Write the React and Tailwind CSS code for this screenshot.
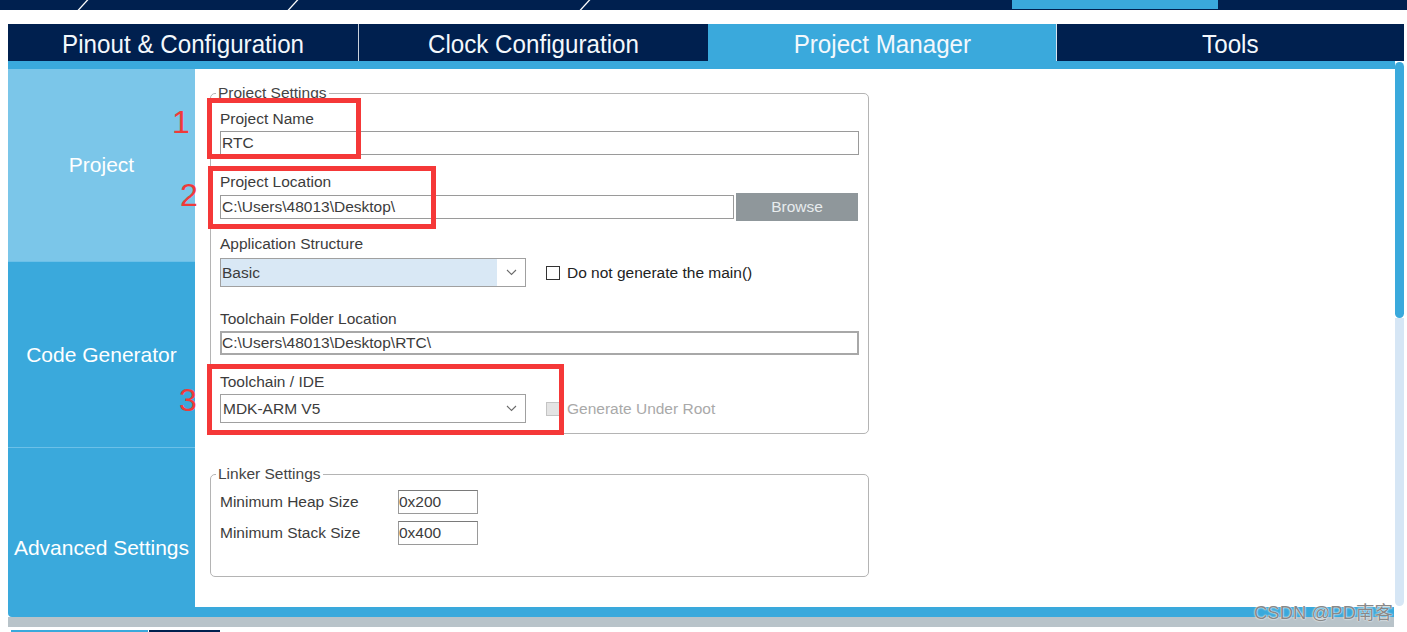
import React from "react";

const Chevron = () => (
    <svg width="11" height="7" viewBox="0 0 11 7" fill="none">
        <path d="M1 1 L5.5 5.5 L10 1" stroke="#6b6b6b" strokeWidth="1.1" />
    </svg>
);

const App = () => {
    return (
        <div className="relative h-[632px] w-[1407px] overflow-hidden bg-white font-['Liberation_Sans','Noto_Sans_CJK_SC',sans-serif]">
            {/* breadcrumb strip (cut off at the top) */}
            <div className="relative flex h-[10px] bg-[#00204f]">
                <div className="ml-[1012px] h-[9px] w-[206px] bg-[#3aa9dc]" />
                <svg className="absolute left-0 top-0" width="1407" height="10">
                    <line x1="78" y1="10.5" x2="88" y2="-0.5" stroke="#ffffff" strokeWidth="1.3" />
                    <line x1="288" y1="10.5" x2="298" y2="-0.5" stroke="#ffffff" strokeWidth="1.3" />
                    <line x1="580" y1="10.5" x2="590" y2="-0.5" stroke="#ffffff" strokeWidth="1.3" />
                </svg>
            </div>

            <div className="pl-[8px] pr-[3px] pt-[14px]">
                {/* Tabs */}
                <div className="flex h-[37px] text-[26px] text-[#f3f8fc]">
                    <div className="flex w-[350px] items-center justify-center bg-[#00204f] pt-[3px]">
                        <span className="inline-block scale-x-[0.93]">Pinout &amp; Configuration</span>
                    </div>
                    <div className="flex w-[349px] items-center justify-center border-l border-[#c9d1dc] bg-[#00204f] pt-[3px]">
                        <span className="inline-block scale-x-[0.93]">Clock Configuration</span>
                    </div>
                    <div className="flex w-[349px] items-center justify-center border-l border-[#00204f] bg-[#3aa9dc] pt-[3px]">
                        <span className="inline-block scale-x-[0.93]">Project Manager</span>
                    </div>
                    <div className="flex flex-1 items-center justify-center border-l border-[#d7e3ee] bg-[#00204f] pt-[3px]">
                        <span className="inline-block scale-x-[0.93]">Tools</span>
                    </div>
                </div>

                <div className="flex">
                    <div className="flex flex-1 flex-col">
                        <div className="h-[8px] bg-[#3aa9dc]" />
                        <div className="flex h-[538px]">
                            {/* Sidebar */}
                            <div className="flex w-[187px] flex-col text-[21px] text-white">
                                <div className="flex h-[192px] items-center justify-center bg-[#7bc6e9]">Project</div>
                                <div className="flex h-[186px] items-center justify-center border-t border-[#6cc0e8] bg-[#3aa9dc]">
                                    Code Generator
                                </div>
                                <div className="flex flex-1 items-start justify-center border-t border-[#6cc0e8] bg-[#3aa9dc] pt-[84px]">
                                    Advanced Settings
                                </div>
                            </div>

                            {/* Main content */}
                            <div className="flex-1 bg-white pl-[15px] pt-[15px] text-[15.5px] text-[#3c3c3c]">
                                <fieldset className="w-[659px] rounded-[5px] border border-[#b4b4b4] px-[5px] pb-[10px] pt-[8px]">
                                    <legend className="px-[2px] leading-[18px] text-[#444]">Project Settings</legend>
                                    <div className="ml-[4px]">
                                        <div className="leading-[18px]">Project Name</div>
                                        <div className="mt-[3px] flex h-[24px] w-[639px] items-center border border-[#9a9a9a] pl-[1px]">RTC</div>

                                        <div className="mt-[18px] leading-[18px]">Project Location</div>
                                        <div className="mt-[2px] flex h-[28px] items-center">
                                            <div className="flex h-[24px] w-[514px] items-center border border-[#9a9a9a] pl-[1px]">
                                                C:\Users\48013\Desktop\
                                            </div>
                                            <div className="ml-[2px] flex h-[28px] w-[122px] items-center justify-center bg-[#8f979b] text-[#e8ecee]">
                                                Browse
                                            </div>
                                        </div>

                                        <div className="mt-[14px] leading-[18px]">Application Structure</div>
                                        <div className="mt-[5px] flex items-center">
                                            <div className="flex h-[29px] w-[306px] border border-[#a0a0a0]">
                                                <div className="flex flex-1 items-center bg-[#d9e8f5] pl-[1px]">Basic</div>
                                                <div className="flex w-[28px] items-center justify-center bg-white">
                                                    <Chevron />
                                                </div>
                                            </div>
                                            <div className="ml-[20px] h-[14px] w-[14px] border border-[#333] bg-white" />
                                            <span className="ml-[7px] text-[#222]">Do not generate the main()</span>
                                        </div>

                                        <div className="mt-[23px] leading-[18px]">Toolchain Folder Location</div>
                                        <div className="mt-[3px] flex h-[24px] w-[639px] items-center border-2 border-[#a8a8a8]">
                                            C:\Users\48013\Desktop\RTC\
                                        </div>

                                        <div className="mt-[18px] leading-[18px]">Toolchain / IDE</div>
                                        <div className="mt-[3px] flex items-center">
                                            <div className="flex h-[29px] w-[306px] border border-[#a0a0a0]">
                                                <div className="flex flex-1 items-center pl-[2px]">MDK-ARM V5</div>
                                                <div className="flex w-[28px] items-center justify-center">
                                                    <Chevron />
                                                </div>
                                            </div>
                                            <div className="ml-[20px] h-[14px] w-[14px] border border-[#c4c4c4] bg-[#e4e4e4]" />
                                            <span className="ml-[7px] text-[#a9a9a9]">Generate Under Root</span>
                                        </div>
                                    </div>
                                </fieldset>

                                <fieldset className="mt-[31px] w-[659px] rounded-[5px] border border-[#b4b4b4] px-[5px] pb-[31px] pt-[7px]">
                                    <legend className="px-[2px] leading-[18px] text-[#444]">Linker Settings</legend>
                                    <div className="ml-[4px]">
                                        <div className="flex h-[24px] items-center">
                                            <span className="w-[178px]">Minimum Heap Size</span>
                                            <div className="flex h-[24px] w-[80px] items-center border border-[#9a9a9a] border-t-[#7a7a7a]">0x200</div>
                                        </div>
                                        <div className="mt-[7px] flex h-[24px] items-center">
                                            <span className="w-[178px]">Minimum Stack Size</span>
                                            <div className="flex h-[24px] w-[80px] items-center border border-[#9a9a9a] border-t-[#7a7a7a]">0x400</div>
                                        </div>
                                    </div>
                                </fieldset>
                            </div>
                        </div>
                    </div>

                    {/* Scrollbar */}
                    <div className="flex w-[9px] flex-col bg-white pb-[1px]">
                        <div className="mt-[1px] h-[256px] rounded-full bg-[#3aa9dc]" />
                        <div className="flex-1 rounded-b-full bg-[#d6e6f5]" />
                    </div>
                </div>

                <div className="h-[10px] w-[1386px] rounded-bl-[4px] bg-[#3aa9dc]" />
                <div className="h-[10px] w-[1386px] bg-[#b8c3c9]" />
            </div>

            <div className="ml-[11px] mt-[3px] flex h-[2px]">
                <div className="w-[137px] bg-[#3aa9dc]" />
                <div className="ml-[1px] w-[71px] bg-[#00204f]" />
            </div>

            {/* Red annotations */}
            <div className="absolute left-[207px] top-[98px] h-[61px] w-[154px] border-[5px] border-[#f53838]" />
            <div className="absolute left-[208px] top-[166px] h-[63px] w-[228px] border-[5px] border-[#f53838]" />
            <div className="absolute left-[207px] top-[364px] h-[71px] w-[357px] border-[5px] border-[#f53838]" />
            <span className="absolute left-[172px] top-[106px] text-[32px] leading-[32px] text-[#f03a3a]">1</span>
            <span className="absolute left-[180px] top-[179px] text-[32px] leading-[32px] text-[#f03a3a]">2</span>
            <span className="absolute left-[179px] top-[384px] text-[32px] leading-[32px] text-[#f03a3a]">3</span>

            {/* Watermark */}
            <span className="absolute left-[1254px] top-[601px] text-[18.5px] leading-[24px] text-[#888888] [text-shadow:0_0_2px_#ffffff,0_0_1px_#ffffff]">
                CSDN @PD南客
            </span>
        </div>
    );
};

export default App;
